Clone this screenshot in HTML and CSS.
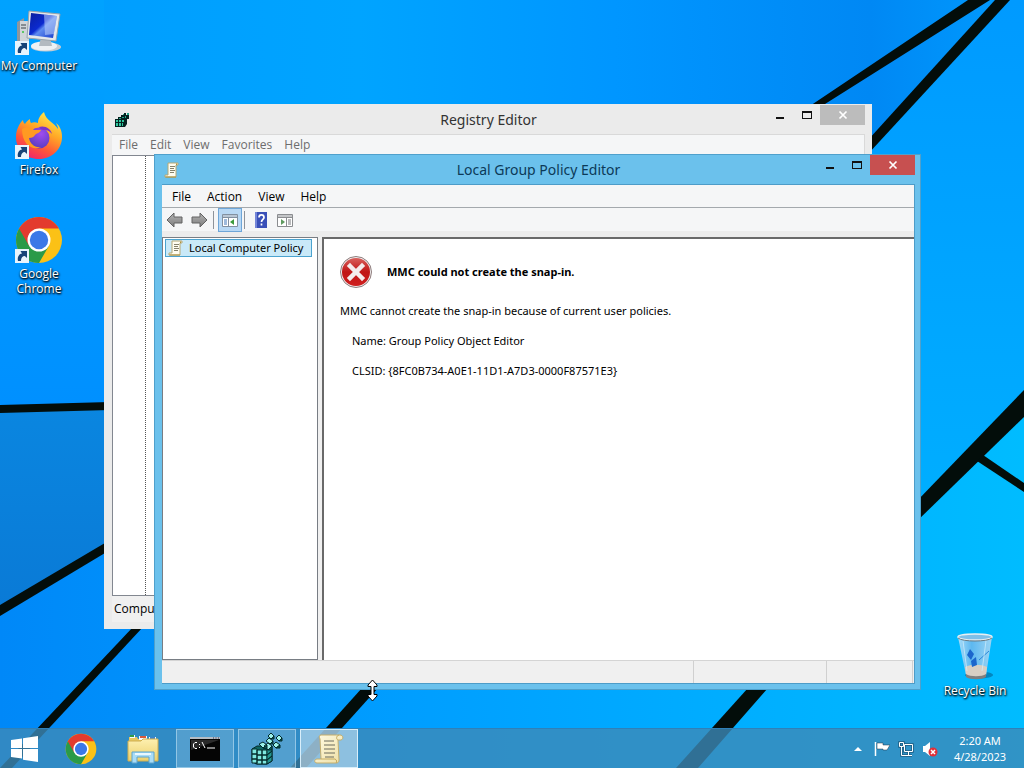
FILE: index.html
```
<!DOCTYPE html>
<html lang="en">

<head>
    <meta charset="UTF-8">
    <meta name="viewport" content="width=device-width, initial-scale=1.0">
    <title>Desktop</title>
    <link rel="stylesheet" href="styles.css">
</head>

<body>
    <!-- shared icons -->
    <svg class="sprites" width="0" height="0" aria-hidden="true">
        <defs>
            <linearGradient id="screen" x1="0" y1="0" x2="1" y2="1">
                <stop offset="0" stop-color="#0a1f9c" />
                <stop offset=".45" stop-color="#0b2ad0" />
                <stop offset=".55" stop-color="#5f8cf0" />
                <stop offset="1" stop-color="#1236c8" />
            </linearGradient>
            <linearGradient id="fox" x1=".8" y1="0" x2=".3" y2="1">
                <stop offset="0" stop-color="#fff14f" />
                <stop offset=".4" stop-color="#ffa826" />
                <stop offset=".7" stop-color="#ff5a36" />
                <stop offset="1" stop-color="#f0246c" />
            </linearGradient>
            <radialGradient id="globe" cx=".6" cy=".3" r=".7">
                <stop offset="0" stop-color="#a04cf0" />
                <stop offset="1" stop-color="#5a3cc0" />
            </radialGradient>
            <linearGradient id="paper" x1="0" y1="0" x2="1" y2="1">
                <stop offset="0" stop-color="#fffbe4" />
                <stop offset="1" stop-color="#eedfa4" />
            </linearGradient>
            <linearGradient id="red" x1="0" y1="0" x2="0" y2="1">
                <stop offset="0" stop-color="#d8605c" />
                <stop offset=".5" stop-color="#c01414" />
                <stop offset="1" stop-color="#cf2020" />
            </linearGradient>
            <linearGradient id="glass" x1="0" y1="0" x2="1" y2="0">
                <stop offset="0" stop-color="#a8dcf8" />
                <stop offset=".4" stop-color="#5db8f0" />
                <stop offset="1" stop-color="#9cd4f4" />
            </linearGradient>
            <linearGradient id="grey" x1="0" y1="0" x2="0" y2="1">
                <stop offset="0" stop-color="#b4b4b4" />
                <stop offset="1" stop-color="#7c7c7c" />
            </linearGradient>
            <linearGradient id="folder" x1="0" y1="0" x2="0" y2="1">
                <stop offset="0" stop-color="#fdf0b0" />
                <stop offset="1" stop-color="#ecd06c" />
            </linearGradient>
        </defs>

        <symbol id="i-chrome" viewBox="0 0 48 48">
            <circle cx="24" cy="24" r="23" fill="#fbc116" />
            <path d="M24 24 4.1 12.5A23 23 0 0 0 24 47L34 29.7Z" fill="#2a9a48" />
            <path d="M4.1 12.5A23 23 0 0 1 43.9 12.5H24L14 29.7Z" fill="#e33b2e" />
            <circle cx="24" cy="24" r="11.5" fill="#fff" />
            <circle cx="24" cy="24" r="9.2" fill="#3b78e7" />
        </symbol>

        <symbol id="i-firefox" viewBox="0 0 48 48">
            <path d="M29 0c-5 4-6 8-6 11-2-1-5-1-7 0-1-1-1-3-1-4-2 1-4 3-5 5-1-1-2-2-2-4C4 12 1 18 1 25c0 13 10 22 23 22s23-10 23-22c0-6-2-11-6-14 1 2 2 4 2 6C39 10 31 9 29 0z" fill="url(#fox)" />
            <circle cx="24" cy="26" r="10.500" fill="url(#globe)" />
            <path d="M7 17c4-3 9-2 12 1h7c-1 3-4 3-6 5-1 2-3 3-6 3 1 6 6 10 12 9-8 4-19-2-19-18z" fill="#ff9a22" />
            <path d="M24 15c6-2 12 2 13 7-3-4-6-4-8-4-2 0-4-1-5-3z" fill="#7b34c8" />
        </symbol>

        <symbol id="i-computer" viewBox="0 0 48 48">
            <path d="M2 14 9 10v27l-7-3z" fill="#8f969c" />
            <path d="M5 13h9v25l-9-3z" fill="#d0d5d9" />
            <path d="M6 17h5M6 20h5" stroke="#6d757b" stroke-width="1.500" />
            <circle cx="8" cy="24" r="1" fill="#38c040" />
            <ellipse cx="31" cy="39" rx="15" ry="4.500" fill="#c5ccd2" />
            <ellipse cx="29" cy="38" rx="13" ry="4.500" fill="#eef1f3" />
            <path d="M26 29h9l2 9H24z" fill="#b3bac0" />
            <path d="M14 3 45 6 41 33 12 30z" fill="#e4e8eb" stroke="#98a2aa" />
            <path d="M16 5 42 8 38 30 14 27z" fill="url(#screen)" />
            <path d="m29 6.500 13 1.500-3 18-9 1z" fill="#c0d4fb" opacity=".55" />
        </symbol>

        <symbol id="i-shortcut" viewBox="0 0 14 14">
            <path d="M0 0h14v14H0z" fill="#e8f4fc" />
            <path d="M3 12C2 8 4 5 7 4.500L5.500 2H12v7L9.800 7C7.500 7 5.800 9 6 12z" fill="#174478" />
        </symbol>

        <symbol id="i-bin" viewBox="0 0 40 48">
            <ellipse cx="24" cy="42" rx="14" ry="3.500" fill="#06395e" opacity=".4" />
            <path d="M3 4h34l-6 38c-3 4-17 4-20 0z" fill="url(#glass)" />
            <path d="M10 34c6-3 16-3 22 0l-1 8c-3 4-17 4-20 0z" fill="#d8cfc4" />
            <path d="M11 41c4 3 16 3 20 0v3c-4 3-16 3-20 0z" fill="#7f7f7f" />
            <path d="m12 22 3-6 4 5-3 6zM16 28l5-4 1 8-5 2z" fill="#1c66cc" />
            <path d="m24 27 10-9" stroke="#2b87d8" />
            <path d="M8 8l4 30M31 8l-4 30" stroke="#d4effc" opacity=".7" />
            <ellipse cx="20" cy="4" rx="17" ry="3" fill="#7fbfe8" stroke="#e9eff2" stroke-width="1.500" />
            <path d="M3 5c4 4 30 4 34 0" fill="none" stroke="#6c7980" />
        </symbol>

        <symbol id="i-scroll" viewBox="0 0 32 32">
            <path d="M8 2h19c3 0 4 4 1 5h-3l1 20c0 2-1 3-3 3H4c-3 0-3-4 0-4h4L7 6C6 4 6 2 8 2z" fill="url(#paper)" stroke="#c4ae6c" />
            <path d="M25 7c-2-1-2-4 1-5M8 26h14c2 1 2 3 1 4" fill="none" stroke="#c4a95c" />
            <path d="M11 8h10M11 12h11M11 16h11M11 20h11M12 24h9" stroke="#6b6a5c" />
        </symbol>

        <symbol id="i-scroll-small" viewBox="0 0 16 16">
            <path d="M4 1h10v2h-2v12H1v-2h3z" fill="#fffdf0" stroke="#b5a876" />
            <path d="M12.500 3V1.500M1.500 15H12" stroke="#b09038" />
            <path d="M6 4.500h5M6 6.500h4M6 8.500h5M6 10.500h4" stroke="#85826c" />
        </symbol>

        <symbol id="i-regedit" viewBox="0 0 32 32">
            <g stroke="#032b2b" stroke-width="1">
                <path d="m1 16 5-3h11l4 4v11l-5 3H5l-4-3z" fill="#0e6663" />
                <path d="M1 16h5v5H1zM6 17h5v5H6zM11 17h5v5h-5zM1 21h5v5H1zM6 22h5v5H6zM11 22h5v5h-5zM1 26h5v4H1zM6 27h5v4H6zM11 27h5v4h-5z" fill="#7fe8df" />
                <path d="m16 17 5-4v5l-5 4zM16 22l5-4v5l-5 4zM16 27l5-4v5l-5 3z" fill="#24948e" />
                <path d="m8 11 4-2 4 3-4 3zM13 13l4-3 4 3-4 4zM15 8l3-3 4 3-3 3zM22 12l3-3 4 3-4 3zM17 3l3-3 3 3-3 3zM25 5l3-3 3 3-3 3z" fill="#9cf2ea" />
                <path d="m12 15 4-3v4zM17 17l4-4v4zM19 11l3-3v3zM25 15l4-3v3zM20 6l3-3v3zM28 8l3-3v3z" fill="#0a5755" />
            </g>
        </symbol>

        <symbol id="i-regedit-small" viewBox="0 0 16 16">
            <path d="M1 7h3V5h3V3h3V1h2v2h3v4h-2v5l-2 3H1z" fill="#04211f" />
            <path d="M2 8h2v2H2zM5 8h2v2H5zM8 8h2v2H8zM2 11h2v3H2zM5 11h2v3H5zM8 11h1v3H8z" fill="#2fc79e" />
            <path d="M5 6h2v1H5zM8 5h2v1H8zM11 4h1v2h-1zM13 1h2v2h-2zM9 2h1v1H9z" fill="#1ea487" />
        </symbol>

        <symbol id="i-explorer" viewBox="0 0 32 30">
            <path d="M2 3h8l1 2h18v6H2z" fill="#e8c860" />
            <path d="M3 1h5v3H3zM12 2h8v4h-8zM22 3h7v4h-7z" fill="#f8fbff" />
            <path d="M3 1h4v2H3z" fill="#2f9e48" />
            <path d="M13 2h6v2h-6z" fill="#d85a3c" />
            <path d="M23 3h5v2h-5z" fill="#3c83d0" />
            <path d="M1 7h13l2-2h15v22H1z" fill="url(#folder)" stroke="#cfae50" />
            <path d="M5 29V18h22v11h-5v-6H10v6z" fill="#a9dcf6" stroke="#5da5cf" />
            <path d="M8 20h16" stroke="#e9f8ff" stroke-width="2" />
        </symbol>

        <symbol id="i-cmd" viewBox="0 0 32 32">
            <path d="M1 4h30v24H1z" fill="#050505" />
            <path d="M1 4h30v2H1z" fill="#b4bcc4" />
            <path d="M24 5h1M26.500 5h1M29 5h1" stroke="#335" />
            <path d="M2 7h28L2 17z" fill="#2a2a2a" />
            <path d="M8 9.500H6L4.500 11v3L6 15.500h2M10.500 11v1M10.500 14v1M13 9l3 6M18 15h8" fill="none" stroke="#fff" />
        </symbol>

        <symbol id="i-close" viewBox="0 0 10 10">
            <path d="m1.500 1.500 7 7M8.500 1.500l-7 7" stroke="#fff" stroke-width="1.700" />
        </symbol>
    </svg>

    <main class="desktop">
        <svg class="wallpaper" viewBox="0 0 1024 768" preserveAspectRatio="none" aria-hidden="true">
            <defs>
                <linearGradient id="sky" x1="0" y1="0" x2="1" y2="0">
                    <stop offset="0" stop-color="#009cff" />
                    <stop offset=".35" stop-color="#00a4ff" />
                    <stop offset=".6" stop-color="#0096ff" />
                    <stop offset=".85" stop-color="#0088f4" />
                    <stop offset="1" stop-color="#009cff" />
                </linearGradient>
                <linearGradient id="left" x1="0" y1="0" x2="0" y2="1">
                    <stop offset="0" stop-color="#00a2ff" />
                    <stop offset="1" stop-color="#0090ff" />
                </linearGradient>
                <linearGradient id="wedge" x1="0" y1="0" x2="0" y2="1">
                    <stop offset="0" stop-color="#0a86e0" />
                    <stop offset="1" stop-color="#0a7ad6" />
                </linearGradient>
                <linearGradient id="floor" x1="0" y1="0" x2="1" y2="0">
                    <stop offset="0" stop-color="#0088f8" />
                    <stop offset=".4" stop-color="#009eff" />
                    <stop offset="1" stop-color="#00bcff" />
                </linearGradient>
                <linearGradient id="side" x1="0" y1="0" x2="0" y2="1">
                    <stop offset="0" stop-color="#009aff" />
                    <stop offset="1" stop-color="#00b0ff" />
                </linearGradient>
            </defs>
            <path d="M0 0h1024v768H0z" fill="url(#sky)" />
            <path d="M0 0h104v406H0z" fill="url(#left)" />
            <path d="M0 408 104 406V548L0 611z" fill="url(#wedge)" />
            <path d="M0 611 104 548H921V507L1024 404V768H0z" fill="url(#floor)" />
            <path d="M1003 0 872 144V560L1024 404V0z" fill="url(#side)" />
            <g fill="#030d0a">
                <path d="M968 0h22L825 104l-30 20-12 0z" />
                <path d="M995 0h15L868 154v-14z" />
                <path d="m1024 390v27L915 523v-20z" />
                <path d="m983 455 41 28v9l-47-31z" />
                <path d="M0 405 110 402v8L0 413z" />
                <path d="m110 540v10L0 616v-11z" />
                <path d="m133 627h10L12 768H0z" />
                <path d="M362 688h16l-72 80h-16z" />
                <path d="M748 688h20l-70 80h-22z" />
            </g>
        </svg>

        <nav class="icons" aria-label="Desktop icons">
            <a class="icon" href="#">
                <span class="pic"><svg><use href="#i-computer" /></svg><svg class="badge"><use href="#i-shortcut" /></svg></span>
                <span>My Computer</span>
            </a>
            <a class="icon" href="#">
                <span class="pic"><svg><use href="#i-firefox" /></svg><svg class="badge"><use href="#i-shortcut" /></svg></span>
                <span>Firefox</span>
            </a>
            <a class="icon" href="#">
                <span class="pic"><svg><use href="#i-chrome" /></svg><svg class="badge"><use href="#i-shortcut" /></svg></span>
                <span>Google Chrome</span>
            </a>
        </nav>
        <a class="icon bin" href="#">
            <span class="pic"><svg><use href="#i-bin" /></svg></span>
            <span>Recycle Bin</span>
        </a>

        <!-- Registry Editor (inactive) -->
        <section class="window regedit">
            <header class="titlebar">
                <svg class="appicon"><use href="#i-regedit-small" /></svg>
                <h1>Registry Editor</h1>
                <div class="controls">
                    <button aria-label="Minimize"><i class="min"></i></button>
                    <button aria-label="Maximize"><i class="max"></i></button>
                    <button class="close" aria-label="Close"><svg><use href="#i-close" /></svg></button>
                </div>
            </header>
            <div class="client">
                <div class="menubar">
                    <button>File</button>
                    <button>Edit</button>
                    <button>View</button>
                    <button>Favorites</button>
                    <button>Help</button>
                </div>
                <div class="keys"></div>
                <div class="path">Computer</div>
            </div>
        </section>

        <!-- Local Group Policy Editor (active) -->
        <section class="window gpedit">
            <header class="titlebar">
                <svg class="appicon"><use href="#i-scroll-small" /></svg>
                <h1>Local Group Policy Editor</h1>
                <div class="controls">
                    <button aria-label="Minimize"><i class="min"></i></button>
                    <button aria-label="Maximize"><i class="max"></i></button>
                    <button class="close" aria-label="Close"><svg><use href="#i-close" /></svg></button>
                </div>
            </header>
            <div class="client">
                <div class="menubar">
                    <button>File</button>
                    <button>Action</button>
                    <button>View</button>
                    <button>Help</button>
                </div>
                <div class="toolbar">
                    <button aria-label="Back">
                        <svg viewBox="0 0 18 16"><path d="M1 8 8 1v4h8v6H8v4z" fill="url(#grey)" stroke="#626262" /></svg>
                    </button>
                    <button aria-label="Forward">
                        <svg viewBox="0 0 18 16"><path d="M17 8 10 1v4H2v6h8v4z" fill="url(#grey)" stroke="#626262" /></svg>
                    </button>
                    <span class="sep"></span>
                    <button class="pressed" aria-label="Show/Hide Console Tree">
                        <svg viewBox="0 0 18 16">
                            <path d="M1.500 2.500h15v12h-15z" fill="#fff" stroke="#8290a0" />
                            <path d="M2 3h14v2H2z" fill="#b9c6d4" />
                            <path d="M2 5.500h14M7.500 6v8" stroke="#8290a0" />
                            <path d="M3 8h3M3 10h3M3 12h3" stroke="#3f74b8" />
                            <path d="M13 7v6l-4-3z" fill="#3c9b3c" />
                        </svg>
                    </button>
                    <span class="sep"></span>
                    <button aria-label="Help">
                        <svg viewBox="0 0 18 16">
                            <path d="M3 0h12v16H3z" fill="#3a50b8" />
                            <path d="M3 0h2v16H3z" fill="#7486d8" />
                            <path d="M7 5.500C7 2 12 2 12 5.500c0 2-2.500 2-2.500 4.500M9.500 11.500v2" fill="none" stroke="#fff" stroke-width="1.700" />
                        </svg>
                    </button>
                    <button aria-label="Show/Hide Action Pane">
                        <svg viewBox="0 0 18 16">
                            <path d="M1.500 2.500h15v12h-15z" fill="#fff" stroke="#8b8d90" />
                            <path d="M2 3h14v2H2z" fill="#c4c6c8" />
                            <path d="M2 5.500h14M10.500 6v8" stroke="#8b8d90" />
                            <path d="M12 8h3M12 10h3M12 12h3" stroke="#77797c" />
                            <path d="M5 7v6l4-3z" fill="#5f9b5f" />
                        </svg>
                    </button>
                </div>
                <div class="panes">
                    <div class="tree">
                        <a class="node" href="#"><svg><use href="#i-scroll-small" /></svg>Local Computer Policy</a>
                    </div>
                    <div class="result">
                        <div class="error">
                            <svg viewBox="0 0 32 32">
                                <circle cx="16" cy="16" r="15.500" fill="#f2eeee" stroke="#8d7c7c" />
                                <circle cx="16" cy="16" r="14" fill="url(#red)" />
                                <path d="m10 10 12 12M22 10 10 22" stroke="#f4ecec" stroke-width="4.500" stroke-linecap="square" />
                            </svg>
                            <h2>MMC could not create the snap-in.</h2>
                        </div>
                        <p>MMC cannot create the snap-in because of current user policies.</p>
                        <p class="detail">Name: Group Policy Object Editor</p>
                        <p class="detail">CLSID: {8FC0B734-A0E1-11D1-A7D3-0000F87571E3}</p>
                    </div>
                </div>
                <footer class="status"><span></span><span></span><span></span></footer>
            </div>
        </section>

        <svg class="cursor" viewBox="0 0 11 23" aria-hidden="true">
            <path d="M5.500 1 10 6v1.500H7v8h3V17l-4.500 5L1 17v-1.500h3v-8H1V6z" fill="#fff" stroke="#000" />
        </svg>
    </main>

    <footer class="taskbar">
        <button class="start" aria-label="Start">
            <svg viewBox="0 0 27 26"><path d="M0 4 11 2.500V12H0zM12 2.300 27 0v12H12zM0 13h11v9.500L0 21zM12 13h15v13l-15-2.300z" fill="#fff" /></svg>
        </button>
        <button class="task" aria-label="Google Chrome"><svg><use href="#i-chrome" /></svg></button>
        <button class="task" aria-label="File Explorer"><svg><use href="#i-explorer" /></svg></button>
        <button class="task open" aria-label="Command Prompt"><svg><use href="#i-cmd" /></svg></button>
        <button class="task open" aria-label="Registry Editor"><svg><use href="#i-regedit" /></svg></button>
        <button class="task open active" aria-label="Local Group Policy Editor"><svg><use href="#i-scroll" /></svg></button>
        <div class="tray">
            <button aria-label="Show hidden icons"><svg viewBox="0 0 16 16"><path d="m4 10 4-4 4 4z" fill="#fff" /></svg></button>
            <button aria-label="Action Center">
                <svg viewBox="0 0 16 16"><path d="M1.500 1v14" stroke="#fff" stroke-width="1.500" /><path d="M3 2h6v2h7l-3 5H9V8H3z" fill="#fff" stroke="#234" stroke-width=".500" /></svg>
            </button>
            <button aria-label="Network">
                <svg viewBox="0 0 16 16"><path d="M6.500 3.500h8v7h-8zM10.500 11v3M7 14.500h7M3.500 6v8.500H8M1.500 1.500h4v4h-4z" fill="none" stroke="#1d5c80" stroke-width="2.500" /><path d="M6.500 3.500h8v7h-8zM10.500 11v3M7 14.500h7M3.500 6v8.500H8M1.500 1.500h4v4h-4z" fill="none" stroke="#fff" /></svg>
            </button>
            <button aria-label="Volume muted">
                <svg viewBox="0 0 16 16"><path d="M1 5h2l5-4v14l-5-4H1z" fill="#fff" /><circle cx="11" cy="11" r="4.500" fill="#e03038" /><path d="m9 9 4 4M13 9l-4 4" stroke="#fff" stroke-width="1.500" /></svg>
            </button>
        </div>
        <div class="clock"><time>2:20 AM</time><time>4/28/2023</time></div>
    </footer>
</body>

</html>
```
FILE: styles.css
```
* {
    box-sizing: border-box;
}

body {
    margin: 0;
    height: 100vh;
    display: flex;
    flex-direction: column;
    overflow: hidden;
    background: #0096ff;
    font: 12px/16px "Open Sans", "Noto Sans", sans-serif;
    color: #000;
}

button {
    margin: 0;
    padding: 0;
    border: 0;
    background: none;
    font: inherit;
    color: inherit;
}

a {
    color: inherit;
    text-decoration: none;
}

h1,
h2,
p {
    margin: 0;
}

svg {
    display: block;
}

.sprites {
    position: absolute;
}

/* desktop */
.desktop {
    flex: 1;
}

.wallpaper {
    position: absolute;
    width: 100%;
    height: 100%;
}

.icons {
    position: absolute;
    left: 0;
    top: 8px;
    display: grid;
    grid-auto-rows: 104px;
}

.icon {
    width: 78px;
    display: flex;
    flex-direction: column;
    align-items: center;
    text-align: center;
    line-height: 15px;
    color: #fff;
    text-shadow: 1px 1px 2px #000, 0 1px 2px #000;
}

.pic {
    position: relative;
    width: 48px;
    height: 48px;
    margin-bottom: 2px;
}

.pic svg {
    width: 48px;
    height: 48px;
}

.pic .badge {
    position: absolute;
    left: 0;
    bottom: 1px;
    width: 14px;
    height: 14px;
}

.bin {
    position: absolute;
    right: 10px;
    bottom: 70px;
}

/* windows */
.window {
    position: absolute;
    display: flex;
    flex-direction: column;
    border: 1px solid;
}

.regedit {
    left: 104px;
    top: 104px;
    width: 768px;
    height: 525px;
    padding: 0 6px 6px 7px;
    background: #ebebeb;
    border-color: #ebebeb;
}

.gpedit {
    left: 154px;
    top: 154px;
    width: 767px;
    height: 536px;
    padding: 0 5px 5px 7px;
    background: #6bc1ec;
    border-color: #4fa0cc;
}

.titlebar {
    display: grid;
    grid-template-columns: 112px 1fr 112px;
    flex: 0 0 29px;
    align-items: center;
}

.titlebar h1 {
    font: 14px/20px "Noto Sans", sans-serif;
    text-align: center;
    color: #333;
}

.gpedit h1 {
    color: #0c3a58;
}

.appicon {
    width: 16px;
    height: 16px;
    margin-left: 2px;
}

.controls {
    display: flex;
    justify-content: flex-end;
    align-self: start;
}

.controls button {
    width: 27px;
    height: 20px;
    display: flex;
    align-items: center;
    justify-content: center;
}

.controls .close {
    width: 45px;
    background: #bcbcbc;
}

.gpedit .close {
    background: #c75050;
}

.close svg {
    width: 10px;
    height: 10px;
}

.min {
    width: 8px;
    height: 2px;
    margin-top: 6px;
    background: #111;
}

.max {
    width: 10px;
    height: 8px;
    border: 1px solid #111;
    border-top-width: 2px;
}

.client {
    flex: 1;
    display: flex;
    flex-direction: column;
    background: #f0f0f0;
}

.regedit .client {
    border: 1px solid #d9d9d9;
    border-width: 1px 1px 0 0;
}

.gpedit .client {
    border: 1px solid #4d9cc8;
    border-left: 0;
}

.menubar {
    display: flex;
    flex: 0 0 20px;
    background: #f5f6f7;
}

.menubar button {
    padding: 0 8px;
}

.regedit .menubar {
    padding-left: 1px;
    color: #6d6d6d;
}

.regedit .menubar button {
    padding: 0 6px;
}

.keys {
    flex: 1;
    background: #fff;
    border: 1px solid #828790;
    border-right: 0;
}

.keys::before {
    content: "";
    display: block;
    width: 32px;
    height: 100%;
    border-right: 1px dotted #555;
}

.path {
    flex: 0 0 24px;
    padding: 5px 2px;
}

.gpedit .menubar {
    flex-basis: 23px;
    padding: 2px 2px 0;
    border-bottom: 1px solid #a4a9ad;
}

.toolbar {
    flex: 0 0 29px;
    display: flex;
    align-items: flex-start;
    padding: 0 1px;
    background: linear-gradient(#f5f6f7 23px, #ececec 23px);
}

.toolbar button {
    width: 24px;
    height: 24px;
    display: flex;
    align-items: center;
    justify-content: center;
}

.toolbar svg {
    width: 18px;
    height: 16px;
}

.toolbar .pressed {
    background: #b8d8f4;
    border: 1px solid #6ea6d8;
}

.sep {
    width: 1px;
    height: 18px;
    margin: 3px 4px 0 2px;
    background: #8e9399;
}

.panes {
    flex: 1;
    display: flex;
    gap: 4px;
    font: 11px/16px "Noto Sans", sans-serif;
}

.tree {
    width: 156px;
    padding: 1px 5px 0 2px;
    background: #fff;
    border: 1px solid #787d84;
}

.node {
    display: flex;
    align-items: center;
    gap: 5px;
    height: 18px;
    padding: 0 2px;
    background: #c9e9f8;
    border: 1px solid #4ba3cf;
    white-space: nowrap;
}

.node svg {
    width: 16px;
    height: 16px;
}

.result {
    flex: 1;
    padding: 17px 16px;
    background: #fff;
    border: solid #696969;
    border-width: 2px 0 0 2px;
}

.error {
    display: flex;
    align-items: center;
    gap: 15px;
    margin-bottom: 15px;
}

.error svg {
    width: 32px;
    height: 32px;
}

.error h2 {
    font-size: 11px;
    line-height: 16px;
}

.result p {
    margin-bottom: 14px;
}

.result .detail {
    margin-left: 12px;
}

.status {
    flex: 0 0 23px;
    display: grid;
    grid-template-columns: 1fr 133px 86px;
    border-top: 1px solid #d4d4d4;
    padding-right: 1px;
}

.status span {
    border-right: 1px solid #d0d0d0;
}

.cursor {
    position: absolute;
    left: 367px;
    top: 679px;
    width: 11px;
    height: 23px;
}

/* taskbar */
.taskbar {
    position: relative;
    flex: 0 0 40px;
    display: flex;
    gap: 4px;
    background: rgba(60, 138, 184, .8);
    border-top: 1px solid #2f80b8;
    color: #fff;
}

.taskbar button {
    display: flex;
    align-items: center;
    justify-content: center;
}

.start {
    width: 48px;
}

.start svg {
    width: 27px;
    height: 26px;
}

.task {
    width: 58px;
}

.task svg {
    width: 32px;
    height: 32px;
}

.taskbar .open {
    background: rgba(255, 255, 255, .17);
    border: 1px solid rgba(190, 225, 245, .6);
}

.taskbar .active {
    background: rgba(255, 255, 255, .45);
    border-color: #d8eefa;
}

.tray {
    margin-left: auto;
    display: flex;
    gap: 8px;
    align-items: center;
}

.tray svg {
    width: 16px;
    height: 16px;
}

.clock {
    width: 82px;
    padding: 4px 6px 0 0;
    text-align: center;
    font: 11px/16px "Noto Sans", sans-serif;
}

.clock time {
    display: block;
}
```
